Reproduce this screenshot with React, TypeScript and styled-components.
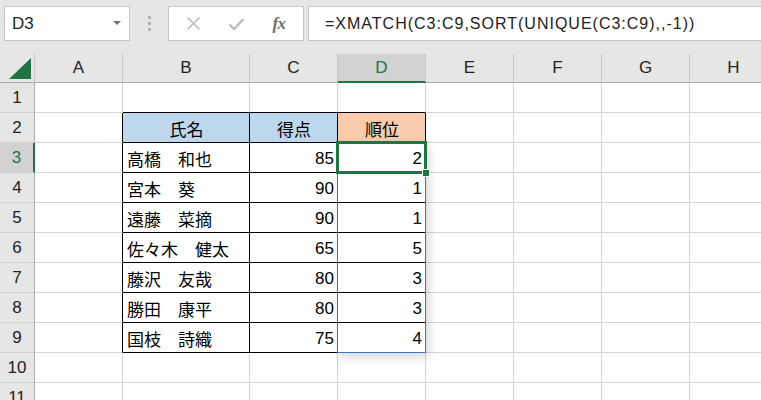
import React from 'react';
import styled, { createGlobalStyle, css } from 'styled-components';

const GlobalStyle = createGlobalStyle`
  html, body {
    margin: 0;
    padding: 0;
    background: #ffffff;
  }
  body {
    font-family: "Liberation Sans", "Noto Sans CJK JP", sans-serif;
  }
`;

// sheet geometry (px, each width/height includes the right/bottom gridline)
const ROW_HEAD_W = 35;
const COL_W = [88, 127, 88, 88, 88, 88, 88, 88];
const COL_NAMES = ['A', 'B', 'C', 'D', 'E', 'F', 'G', 'H'];
const HEAD_H = 29;
const ROW_H = 30;
const ROW_COUNT = 11;

const GREEN = '#217346';
const GRID = '#d4d4d4';

type Row = { name: string; score: number; rank: number };

const rows: Row[] = [
  { name: '高橋　和也', score: 85, rank: 2 },
  { name: '宮本　葵', score: 90, rank: 1 },
  { name: '遠藤　菜摘', score: 90, rank: 1 },
  { name: '佐々木　健太', score: 65, rank: 5 },
  { name: '藤沢　友哉', score: 80, rank: 3 },
  { name: '勝田　康平', score: 80, rank: 3 },
  { name: '国枝　詩織', score: 75, rank: 4 },
];

const Window = styled.div`
  width: 761px;
  height: 400px;
  overflow: hidden;
  background: #e6e6e6;
`;

const FormulaBar = styled.div`
  height: 54px;
  box-sizing: border-box;
  padding: 6px 0 0 4px;
  display: flex;
  align-items: flex-start;
`;

const NameBox = styled.div`
  width: 126px;
  height: 35px;
  box-sizing: border-box;
  background: #fff;
  border: 1px solid #c6c6c6;
  display: flex;
  align-items: center;
  justify-content: space-between;
  padding: 1px 8px 0 7px;
  font-size: 17px;
  color: #262626;
`;

const DropArrow = styled.span`
  width: 0;
  height: 0;
  border-left: 4px solid transparent;
  border-right: 4px solid transparent;
  border-top: 4px solid #767676;
  margin-top: -2px;
`;

const Grip = styled.div`
  width: 38px;
  height: 35px;
  display: flex;
  flex-direction: column;
  align-items: center;
  justify-content: center;
  gap: 3px;
`;

const GripDot = styled.span`
  width: 3px;
  height: 3px;
  background: #b4b4b4;
`;

const ButtonGroup = styled.div`
  width: 136px;
  height: 35px;
  box-sizing: border-box;
  background: #fff;
  border: 1px solid #c6c6c6;
  display: flex;
  align-items: center;
  justify-content: space-between;
  padding: 0 14px 0 14px;
`;

const IconButton = styled.span`
  width: 20px;
  height: 20px;
  display: flex;
  align-items: center;
  justify-content: center;
`;

const FxLabel = styled.span`
  font-family: "Liberation Serif", "DejaVu Serif", serif;
  font-style: italic;
  font-weight: bold;
  font-size: 17px;
  color: #6e6e6e;
  letter-spacing: -0.5px;
`;

const FormulaInput = styled.div`
  flex: 1;
  height: 35px;
  margin-left: 4px;
  box-sizing: border-box;
  background: #fff;
  border: 1px solid #c6c6c6;
  border-right: none;
  display: flex;
  align-items: center;
  padding: 1px 0 0 16px;
  font-size: 16px;
  letter-spacing: 1px;
  color: #222;
  white-space: nowrap;
`;

const Sheet = styled.div`
  position: relative;
  display: grid;
  grid-template-columns: ${ROW_HEAD_W}px ${COL_W.map((w) => `${w}px`).join(' ')};
  grid-template-rows: ${HEAD_H}px repeat(${ROW_COUNT}, ${ROW_H}px);
  background: #fff;
`;

const Corner = styled.div`
  background: #e6e6e6;
  border-right: 1px solid #c6c6c6;
  border-bottom: 1px solid #ababab;
  position: relative;
`;

const CornerTriangle = styled.span`
  position: absolute;
  left: 9px;
  bottom: 3px;
  width: 0;
  height: 0;
  border-left: 22px solid transparent;
  border-bottom: 21px solid ${GREEN};
`;

const ColHead = styled.div<{ $active?: boolean }>`
  box-sizing: border-box;
  background: #e6e6e6;
  border-right: 1px solid #c6c6c6;
  border-bottom: 1px solid #ababab;
  display: flex;
  align-items: center;
  justify-content: center;
  font-size: 17px;
  color: #222;
  ${(p) =>
    p.$active &&
    css`
      background: #d2d2d2;
      color: ${GREEN};
      border-bottom: 2px solid ${GREEN};
    `}
`;

const RowHead = styled.div<{ $active?: boolean }>`
  box-sizing: border-box;
  background: #e6e6e6;
  border-right: 1px solid #ababab;
  border-bottom: 1px solid #d0d0d0;
  display: flex;
  align-items: center;
  justify-content: center;
  font-size: 17px;
  color: #222;
  ${(p) =>
    p.$active &&
    css`
      background: #d2d2d2;
      color: ${GREEN};
      border-right: 2px solid ${GREEN};
    `}
`;

const Cell = styled.div<{
  $align?: 'left' | 'right' | 'center';
  $fill?: string;
  $edgeRight?: boolean;
  $edgeBottom?: boolean;
}>`
  box-sizing: border-box;
  border-right: 1px solid ${(p) => (p.$edgeRight ? '#000' : GRID)};
  border-bottom: 1px solid ${(p) => (p.$edgeBottom ? '#000' : GRID)};
  background: ${(p) => p.$fill || '#fff'};
  display: flex;
  align-items: center;
  justify-content: ${(p) =>
    p.$align === 'right' ? 'flex-end' : p.$align === 'center' ? 'center' : 'flex-start'};
  padding: 2px 3px 0 4px;
  font-size: 17px;
  color: #000;
  white-space: nowrap;
  overflow: hidden;
`;

const SpillRange = styled.div`
  position: absolute;
  box-sizing: border-box;
  border: 1px solid #4472c4;
  box-shadow: 3px 4px 9px rgba(0, 0, 0, 0.16);
  pointer-events: none;
`;

const Selection = styled.div`
  position: absolute;
  box-sizing: border-box;
  border: 3px solid ${GREEN};
  pointer-events: none;
`;

const FillHandle = styled.span`
  position: absolute;
  right: -6px;
  bottom: -6px;
  width: 6px;
  height: 6px;
  background: ${GREEN};
  border: 1px solid #fff;
`;

// left edge of a column's gridline (col index 0 = A)
const colLine = (c: number) => ROW_HEAD_W + COL_W.slice(0, c).reduce((a, b) => a + b, 0) - 1;
// top gridline of a sheet row (1-based)
const rowLine = (r: number) => HEAD_H + (r - 1) * ROW_H - 1;

function cellFor(row: number, col: number) {
  // table lives in B2:D9
  const inTableRow = row >= 2 && row <= 9;
  const inTableCol = col >= 1 && col <= 3;
  const edgeRight = inTableRow && col >= 0 && col <= 3;
  const edgeBottom = inTableCol && row >= 1 && row <= 9;

  let text: React.ReactNode = null;
  let align: 'left' | 'right' | 'center' = 'left';
  let fill: string | undefined;

  if (row === 2 && inTableCol) {
    text = ['氏名', '得点', '順位'][col - 1];
    align = 'center';
    fill = col === 3 ? '#f8cbad' : '#bdd7ee';
  } else if (row >= 3 && row <= 9 && inTableCol) {
    const r = rows[row - 3];
    if (col === 1) text = r.name;
    if (col === 2) {
      text = r.score;
      align = 'right';
    }
    if (col === 3) {
      text = r.rank;
      align = 'right';
    }
  }

  return (
    <Cell
      key={`${row}-${col}`}
      $align={align}
      $fill={fill}
      $edgeRight={edgeRight}
      $edgeBottom={edgeBottom}
    >
      {text}
    </Cell>
  );
}

export default function App() {
  const dLeft = colLine(3);
  const dWidth = COL_W[3] + 1;

  return (
    <>
      <GlobalStyle />
      <Window>
        <FormulaBar>
          <NameBox>
            <span>D3</span>
            <DropArrow />
          </NameBox>
          <Grip>
            <GripDot />
            <GripDot />
            <GripDot />
          </Grip>
          <ButtonGroup>
            <IconButton>
              <svg width="15" height="15" viewBox="0 0 15 15">
                <path d="M1.5 1.5 L13.5 13.5 M13.5 1.5 L1.5 13.5" stroke="#bcbcbc" strokeWidth="1.6" fill="none" />
              </svg>
            </IconButton>
            <IconButton>
              <svg width="17" height="14" viewBox="0 0 17 14">
                <path d="M1.5 7.5 L6 12 L15.5 2" stroke="#bcbcbc" strokeWidth="2.4" fill="none" />
              </svg>
            </IconButton>
            <IconButton>
              <FxLabel>fx</FxLabel>
            </IconButton>
          </ButtonGroup>
          <FormulaInput>=XMATCH(C3:C9,SORT(UNIQUE(C3:C9),,-1))</FormulaInput>
        </FormulaBar>

        <Sheet>
          <Corner>
            <CornerTriangle />
          </Corner>
          {COL_NAMES.map((n) => (
            <ColHead key={n} $active={n === 'D'}>
              {n}
            </ColHead>
          ))}
          {Array.from({ length: ROW_COUNT }, (_, i) => i + 1).map((row) => (
            <React.Fragment key={row}>
              <RowHead $active={row === 3}>{row}</RowHead>
              {COL_NAMES.map((_, col) => cellFor(row, col))}
            </React.Fragment>
          ))}

          <SpillRange
            style={{
              left: dLeft,
              top: rowLine(3),
              width: dWidth,
              height: ROW_H * 7 + 1,
            }}
          />
          <Selection
            style={{
              left: dLeft - 1,
              top: rowLine(3) - 1,
              width: dWidth + 2,
              height: ROW_H + 3,
            }}
          >
            <FillHandle />
          </Selection>
        </Sheet>
      </Window>
    </>
  );
}
